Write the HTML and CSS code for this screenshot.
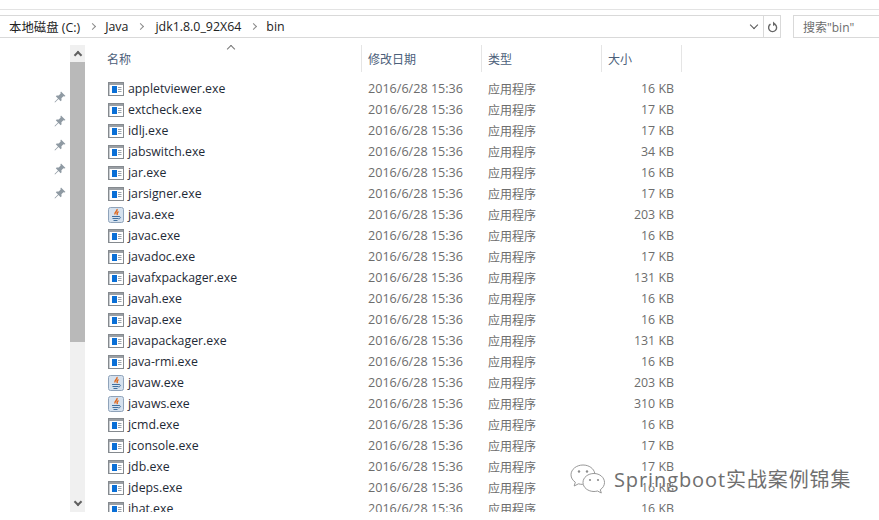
FILE: index.html
```html
<!DOCTYPE html>
<html lang="zh">
<head>
<meta charset="utf-8">
<title>bin</title>
<link rel="stylesheet" href="styles.css">
</head>
<body>
<svg class="defs" width="0" height="0" aria-hidden="true">
  <symbol id="exe" viewBox="0 0 16 14">
    <rect x="0.5" y="0.5" width="15" height="13" fill="#fff" stroke="#858a8f"/>
    <rect x="1" y="1" width="14" height="2" fill="#9a9fa4"/>
    <rect x="1" y="3" width="1" height="10" fill="#c9cdd1"/>
    <rect x="4" y="4" width="5" height="7" fill="#0a6fd6"/>
    <path d="M10 5.500h3.500M10 7.500h3.500M10 9.500h3.500" stroke="#9aa3ab" stroke-width="1"/>
  </symbol>
  <symbol id="jav" viewBox="0 0 16 16">
    <rect x="0.5" y="0.5" width="15" height="15" rx="2" fill="#d5e1ee" stroke="#8fa3ba"/>
    <path d="M9 2c1 2-3 3-2 5.500M10.500 4.500c-1.500 1-2 2-1 3.500" fill="none" stroke="#e0661a" stroke-width="1.400"/>
    <path d="M4 9.500h7M4.500 11.500h6M5.500 13.500h4M11 9.500c2 0 2 2-.5 2.500" fill="none" stroke="#3f6f9f" stroke-width="1"/>
  </symbol>
  <symbol id="pin" viewBox="0 0 12 12">
    <path d="M7 0.500l4.500 4.500-1.200.6-.9-.3-2 2 .2 2-.9.9-2.200-2.200L1 11.500l-.5-.5 3.500-3.500L1.800 5.300l.9-.9 2 .2 2-2-.3-.9z" fill="#8f9aa3"/>
  </symbol>
</svg>

<div class="topline"></div>

<header class="toolbar">
  <div class="address">
    <nav class="crumbs">
      <span>本地磁盘 (C:)</span><i class="sep"></i>
      <span>Java</span><i class="sep wide"></i>
      <span>jdk1.8.0_92X64</span><i class="sep"></i>
      <span>bin</span>
    </nav>
    <i class="drop"></i>
    <div class="refresh">
      <svg width="11" height="12" viewBox="0 0 11 12"><path d="M3.500 3.200A4 4 0 1 0 8 3.400" fill="none" stroke="#666" stroke-width="1.400"/><path d="M6 0.500v4.500l3-1.800z" fill="#666"/></svg>
    </div>
  </div>
  <div class="search">搜索"bin"</div>
</header>

<main class="body">
  <aside class="pins">
    <svg class="pin"><use href="#pin"/></svg>
    <svg class="pin"><use href="#pin"/></svg>
    <svg class="pin"><use href="#pin"/></svg>
    <svg class="pin"><use href="#pin"/></svg>
    <svg class="pin"><use href="#pin"/></svg>
  </aside>
  <div class="scrollbar">
    <div class="arrow"><i class="chev up"></i></div>
    <div class="thumb"></div>
    <div class="track"></div>
    <div class="arrow"><i class="chev down"></i></div>
  </div>
  <section class="list">
    <div class="head">
      <div class="hc name">名称<i class="sort"></i></div>
      <div class="hc">修改日期</div>
      <div class="hc">类型</div>
      <div class="hc">大小</div>
    </div>
    <div class="rows">
      <div class="row"><svg class="ic"><use href="#exe"/></svg><span class="fn">appletviewer.exe</span><span class="dt">2016/6/28 15:36</span><span class="ty">应用程序</span><span class="sz">16 KB</span></div>
      <div class="row"><svg class="ic"><use href="#exe"/></svg><span class="fn">extcheck.exe</span><span class="dt">2016/6/28 15:36</span><span class="ty">应用程序</span><span class="sz">17 KB</span></div>
      <div class="row"><svg class="ic"><use href="#exe"/></svg><span class="fn">idlj.exe</span><span class="dt">2016/6/28 15:36</span><span class="ty">应用程序</span><span class="sz">17 KB</span></div>
      <div class="row"><svg class="ic"><use href="#exe"/></svg><span class="fn">jabswitch.exe</span><span class="dt">2016/6/28 15:36</span><span class="ty">应用程序</span><span class="sz">34 KB</span></div>
      <div class="row"><svg class="ic"><use href="#exe"/></svg><span class="fn">jar.exe</span><span class="dt">2016/6/28 15:36</span><span class="ty">应用程序</span><span class="sz">16 KB</span></div>
      <div class="row"><svg class="ic"><use href="#exe"/></svg><span class="fn">jarsigner.exe</span><span class="dt">2016/6/28 15:36</span><span class="ty">应用程序</span><span class="sz">17 KB</span></div>
      <div class="row"><svg class="ic tall"><use href="#jav"/></svg><span class="fn">java.exe</span><span class="dt">2016/6/28 15:36</span><span class="ty">应用程序</span><span class="sz">203 KB</span></div>
      <div class="row"><svg class="ic"><use href="#exe"/></svg><span class="fn">javac.exe</span><span class="dt">2016/6/28 15:36</span><span class="ty">应用程序</span><span class="sz">16 KB</span></div>
      <div class="row"><svg class="ic"><use href="#exe"/></svg><span class="fn">javadoc.exe</span><span class="dt">2016/6/28 15:36</span><span class="ty">应用程序</span><span class="sz">17 KB</span></div>
      <div class="row"><svg class="ic"><use href="#exe"/></svg><span class="fn">javafxpackager.exe</span><span class="dt">2016/6/28 15:36</span><span class="ty">应用程序</span><span class="sz">131 KB</span></div>
      <div class="row"><svg class="ic"><use href="#exe"/></svg><span class="fn">javah.exe</span><span class="dt">2016/6/28 15:36</span><span class="ty">应用程序</span><span class="sz">16 KB</span></div>
      <div class="row"><svg class="ic"><use href="#exe"/></svg><span class="fn">javap.exe</span><span class="dt">2016/6/28 15:36</span><span class="ty">应用程序</span><span class="sz">16 KB</span></div>
      <div class="row"><svg class="ic"><use href="#exe"/></svg><span class="fn">javapackager.exe</span><span class="dt">2016/6/28 15:36</span><span class="ty">应用程序</span><span class="sz">131 KB</span></div>
      <div class="row"><svg class="ic"><use href="#exe"/></svg><span class="fn">java-rmi.exe</span><span class="dt">2016/6/28 15:36</span><span class="ty">应用程序</span><span class="sz">16 KB</span></div>
      <div class="row"><svg class="ic tall"><use href="#jav"/></svg><span class="fn">javaw.exe</span><span class="dt">2016/6/28 15:36</span><span class="ty">应用程序</span><span class="sz">203 KB</span></div>
      <div class="row"><svg class="ic tall"><use href="#jav"/></svg><span class="fn">javaws.exe</span><span class="dt">2016/6/28 15:36</span><span class="ty">应用程序</span><span class="sz">310 KB</span></div>
      <div class="row"><svg class="ic"><use href="#exe"/></svg><span class="fn">jcmd.exe</span><span class="dt">2016/6/28 15:36</span><span class="ty">应用程序</span><span class="sz">16 KB</span></div>
      <div class="row"><svg class="ic"><use href="#exe"/></svg><span class="fn">jconsole.exe</span><span class="dt">2016/6/28 15:36</span><span class="ty">应用程序</span><span class="sz">17 KB</span></div>
      <div class="row"><svg class="ic"><use href="#exe"/></svg><span class="fn">jdb.exe</span><span class="dt">2016/6/28 15:36</span><span class="ty">应用程序</span><span class="sz">17 KB</span></div>
      <div class="row"><svg class="ic"><use href="#exe"/></svg><span class="fn">jdeps.exe</span><span class="dt">2016/6/28 15:36</span><span class="ty">应用程序</span><span class="sz">16 KB</span></div>
      <div class="row"><svg class="ic"><use href="#exe"/></svg><span class="fn">jhat.exe</span><span class="dt">2016/6/28 15:36</span><span class="ty">应用程序</span><span class="sz">16 KB</span></div>
    </div>
  </section>
</main>

<div class="watermark">
  <svg class="wechat" width="36" height="32" viewBox="0 0 36 32">
    <path d="M13 1C6.500 1 1 5.300 1 10.800c0 3 1.700 5.600 4.300 7.400L4.200 22l4.300-2.200c1.300.4 2.800.6 4.300.6" fill="#fff" fill-opacity=".75" stroke="#8c8c8c" stroke-width=".9"/>
    <path d="M13 1c6 0 11 3.600 11.800 8.400" fill="#fff" fill-opacity=".75" stroke="#8c8c8c" stroke-width=".9"/>
    <path d="M24 9.500c-6 0-11 3.900-11 9s5 9 11 9c1.200 0 2.400-.2 3.500-.5l3.800 2-1-3.300c2.600-1.700 4.200-4.300 4.200-7.200 0-5.100-4.800-9-10.500-9z" fill="#fff" fill-opacity=".8" stroke="#8c8c8c" stroke-width=".9"/>
    <circle cx="9" cy="7.500" r="1.200" fill="#8c8c8c"/><circle cx="17" cy="7.500" r="1.200" fill="#8c8c8c"/>
    <circle cx="20" cy="16" r="1.100" fill="#8c8c8c"/><circle cx="28" cy="16" r="1.100" fill="#8c8c8c"/>
  </svg>
  <span class="mark">Springboot实战案例锦集</span>
</div>
</body>
</html>
```

FILE: styles.css
```css
* { box-sizing: border-box; }
html, body { margin: 0; height: 520px; overflow: hidden; background: #fff; }
body {
  position: relative;
  font-family: "Open Sans", "Noto Sans CJK SC", sans-serif;
  font-size: 12px;
  color: #1e1e1e;
  padding-top: 9px;
}
.defs { position: absolute; }
.topline { height: 1px; background: #e3e3e3; }

.toolbar { display: flex; margin-top: 5px; height: 23px; }
.address {
  width: 781px;
  display: flex;
  align-items: center;
  border: 1px solid #d9d9d9;
  border-left: 0;
}
.crumbs { flex: 1; display: flex; align-items: center; padding-left: 9px; font-size: 12.400px; color: #222; }
.sep {
  width: 5px; height: 5px; margin: 0 10px;
  border-top: 1.500px solid #8a8a8a; border-right: 1.500px solid #8a8a8a;
  transform: rotate(45deg);
}
.sep.wide { margin: 0 12px 0 10px; }
.drop {
  width: 6px; height: 6px; margin: -3px 6px 0 0;
  border-bottom: 1.500px solid #555; border-right: 1.500px solid #555;
  transform: rotate(45deg);
}
.refresh {
  width: 17px; height: 100%;
  display: flex; align-items: center; justify-content: center;
  border-left: 1px solid #d9d9d9;
}
.search {
  width: 86px; margin-left: 12px; padding-left: 9px;
  display: flex; align-items: center;
  border: 1px solid #d9d9d9; border-right: 0;
  color: #6d6d6d; font-size: 12px;
}

.body { display: flex; margin-top: 7px; height: 467px; }
.pins {
  width: 70px; flex: none;
  display: flex; flex-direction: column; align-items: flex-end;
  gap: 12px; padding: 46px 4px 0 0;
}
.pin { width: 12px; height: 12px; }
.scrollbar { width: 15px; flex: none; display: flex; flex-direction: column; background: #f0f0f0; }
.arrow { height: 17px; display: flex; align-items: center; justify-content: center; }
.thumb { height: 280px; background: #b9b9b9; }
.track { flex: 1; }
.chev { width: 6px; height: 6px; border-left: 2px solid #606060; border-top: 2px solid #606060; }
.chev.up { transform: rotate(45deg); margin-top: 3px; }
.chev.down { transform: rotate(225deg); margin-top: -3px; }

.list { flex: 1; min-width: 0; overflow: hidden; padding-left: 3px; }
.head { display: grid; grid-template-columns: 274px 120px 120px 80px; height: 27px; }
.hc {
  position: relative;
  display: flex; align-items: center;
  padding-left: 6px;
  border-right: 1px solid #e5e5e5;
  color: #4c607a;
  font-size: 12px;
}
.hc.name { padding-left: 19px; }
.sort {
  position: absolute; left: 140px; top: 1px;
  width: 6px; height: 6px;
  border-left: 1px solid #777; border-top: 1px solid #777;
  transform: rotate(45deg);
}
.rows { padding-top: 6px; }
.row { display: grid; grid-template-columns: 20px 240px 120px 120px 66px; align-items: center; height: 21px; padding-left: 20px; }
.ic { width: 16px; height: 14px; }
.ic.tall { height: 16px; }
.fn { color: #1e2a36; font-size: 12.300px; white-space: nowrap; }
.dt { color: #6d6d6d; font-size: 12.600px; white-space: nowrap; }
.ty { color: #6d6d6d; font-size: 12px; white-space: nowrap; }
.sz { color: #6d6d6d; font-size: 12.400px; white-space: nowrap; text-align: right; }

.watermark {
  position: absolute; left: 570px; top: 464px;
  display: flex; align-items: center; gap: 8px;
}
.mark {
  font-size: 20px; line-height: 32px; letter-spacing: .9px;
  color: #6f6f6f;
  text-shadow: 0 0 1px #fff, 1px 1px 0 #fff;
}
```
